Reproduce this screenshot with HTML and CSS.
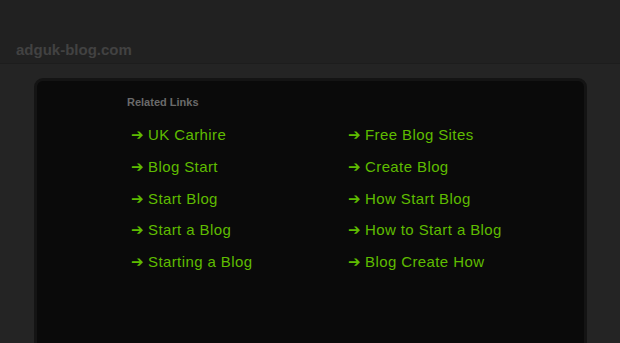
FILE: index.html
```html
<!DOCTYPE html>
<html lang="en">
<head>
    <meta charset="UTF-8">
    <title>adguk-blog.com</title>
    <link rel="stylesheet" href="styles.css">
</head>
<body>
    <div class="header">
        <span class="domain">adguk-blog.com</span>
    </div>

    <div class="main">
        <div class="box">
            <h2>Related Links</h2>
            <div class="links">
                <a href="#"><span class="arrow">&#10132;</span>UK Carhire</a>
                <a href="#"><span class="arrow">&#10132;</span>Free Blog Sites</a>
                <a href="#"><span class="arrow">&#10132;</span>Blog Start</a>
                <a href="#"><span class="arrow">&#10132;</span>Create Blog</a>
                <a href="#"><span class="arrow">&#10132;</span>Start Blog</a>
                <a href="#"><span class="arrow">&#10132;</span>How Start Blog</a>
                <a href="#"><span class="arrow">&#10132;</span>Start a Blog</a>
                <a href="#"><span class="arrow">&#10132;</span>How to Start a Blog</a>
                <a href="#"><span class="arrow">&#10132;</span>Starting a Blog</a>
                <a href="#"><span class="arrow">&#10132;</span>Blog Create How</a>
            </div>
        </div>
    </div>
</body>
</html>
```

FILE: styles.css
```css
body {
    margin: 0;
    background-color: #242424;
    font-family: "Liberation Sans", Arial, sans-serif;
    height: 343px;
    overflow: hidden;
}

.header {
    height: 64px;
    background-color: #212121;
    border-bottom: 1px solid #1d1d1d;
    box-sizing: border-box;
    padding: 40px 0 0 16px;
}

.domain {
    font-size: 15px;
    font-weight: 700;
    color: #424242;
    line-height: 20px;
}

.main {
    padding: 14px 33px 0 34px;
}

.box {
    background-color: #0a0a0a;
    border: 3px solid #141414;
    border-radius: 9px 9px 0 0;
    height: 300px;
    padding: 14px 0 0 90px;
}

h2 {
    margin: 0 0 16px 0;
    font-size: 11px;
    font-weight: 700;
    color: #6a6a6a;
    line-height: 14px;
}

.links {
    display: grid;
    grid-template-columns: 217px 217px;
    grid-auto-rows: 31.75px;
    padding-left: 4px;
}

.links a {
    color: #5fbc00;
    text-decoration: none;
    font-size: 15px;
    letter-spacing: 0.4px;
    line-height: 20px;
}

.arrow {
    display: inline-block;
    width: 17px;
    letter-spacing: 0;
    font-family: "DejaVu Sans", sans-serif;
    font-size: 15px;
    font-weight: 700;
}
```
